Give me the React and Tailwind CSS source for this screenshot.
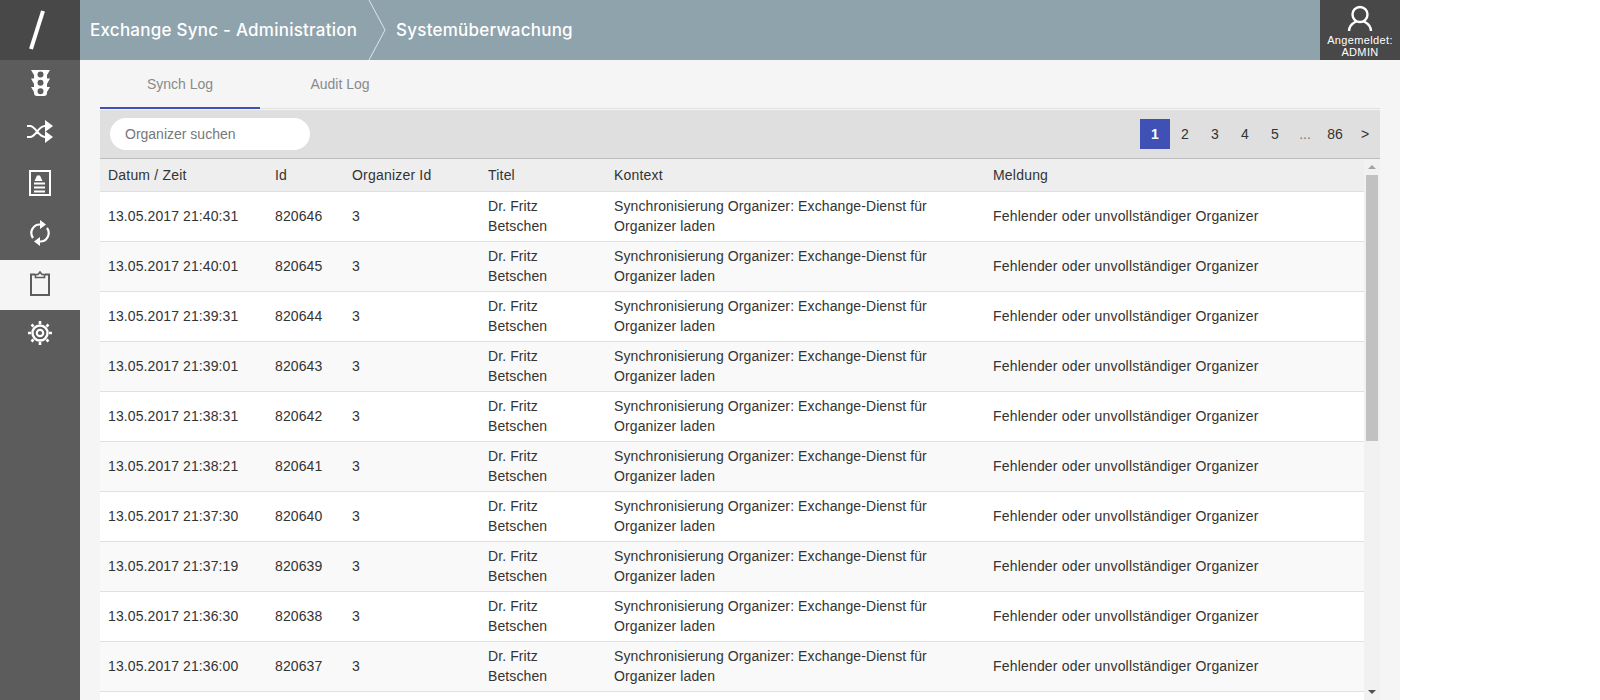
const rows = [
  ["13.05.2017 21:40:31", "820646"],
  ["13.05.2017 21:40:01", "820645"],
  ["13.05.2017 21:39:31", "820644"],
  ["13.05.2017 21:39:01", "820643"],
  ["13.05.2017 21:38:31", "820642"],
  ["13.05.2017 21:38:21", "820641"],
  ["13.05.2017 21:37:30", "820640"],
  ["13.05.2017 21:37:19", "820639"],
  ["13.05.2017 21:36:30", "820638"],
  ["13.05.2017 21:36:00", "820637"],
];

const gridCols = "grid grid-cols-[167px_77px_136px_126px_379px_1fr]";

const NavIcon = ({ active, children }) => (
  <div className={`h-[50px] pb-[4px] flex items-center justify-center ${active ? "bg-[#f5f5f5] text-[#5c5c5c]" : "text-white"}`}>
    {children}
  </div>
);

const App = () => {
  return (
    <div className="w-[1400px] h-[700px] flex overflow-hidden font-['Liberation_Sans',Arial,sans-serif] text-[14px] text-[#333]">
      {/* Sidebar */}
      <div className="w-[80px] shrink-0 bg-[#5c5c5c] flex flex-col">
        <div className="h-[60px] bg-[#484848] flex items-center justify-center">
          <svg className="mr-[7px]" width="18" height="40" viewBox="0 0 18 40">
            <path d="M15 1 L3 39" stroke="#fff" strokeWidth="4" />
          </svg>
        </div>
        <NavIcon>
          <svg width="19" height="26" viewBox="0 0 19 26" fill="currentColor">
            <path
              fillRule="evenodd"
              d="M0 0H19L16 5V8.500H19L16 14V17H19L16 22V23Q16 26 13 26H6Q3 26 3 23V22L0 17H3V14L0 8.500H3V5ZM9.500 1.400a3 3 0 1 0 0 6a3 3 0 0 0 0-6zM9.500 9.800a3 3 0 1 0 0 6a3 3 0 0 0 0-6zM9.500 18.200a3 3 0 1 0 0 6a3 3 0 0 0 0-6z"
            />
          </svg>
        </NavIcon>
        <NavIcon>
          <svg className="mb-[3px]" width="26" height="23" viewBox="0 0 26 23" fill="none" stroke="currentColor" strokeWidth="2">
            <path d="M0 6h3c6 0 8 11 15 11h2M0 17h3c6 0 8-11 15-11h2" />
            <path d="M18 0l8 6-8 6zM18 11l8 6-8 6z" fill="currentColor" stroke="none" />
          </svg>
        </NavIcon>
        <NavIcon>
          <svg width="22" height="26" viewBox="0 0 22 26" fill="none" stroke="currentColor" strokeWidth="2">
            <path d="M1 1h20v24H1z" />
            <path d="M8 5.500h3l2.500 5.500h-8z" fill="currentColor" stroke="none" />
            <path d="M5 13.500h11M5 17.500h11M5 21.500h11" />
          </svg>
        </NavIcon>
        <NavIcon>
          <svg width="20" height="26" viewBox="0 0 20 26" fill="none" stroke="currentColor" strokeWidth="2.200">
            <path d="M3 18A8.500 8.500 0 0 1 10 4.500" />
            <path d="M17 8A8.500 8.500 0 0 1 10 21.500" />
            <path d="M10 0l6 4.500-6 4.500zM10 17l-6 4.500 6 4.500z" fill="currentColor" stroke="none" />
          </svg>
        </NavIcon>
        <NavIcon active>
          <svg width="20" height="25" viewBox="0 0 20 25" fill="none" stroke="currentColor" strokeWidth="2">
            <path d="M5 3.500H1V24H19V3.500H15" />
            <path d="M5.500 6.500V3.500H8L10 1L12 3.500H14.500V6.500Z" strokeWidth="1.600" />
          </svg>
        </NavIcon>
        <NavIcon>
          <svg width="24" height="24" viewBox="0 0 24 24" fill="none" stroke="currentColor">
            <circle cx="12" cy="12" r="7.500" strokeWidth="2.400" />
            <circle cx="12" cy="12" r="3.200" strokeWidth="2.200" />
            <path d="M12 0v3M12 21v3M0 12h3M21 12h3M3.500 3.500l2 2M18.500 18.500l2 2M3.500 20.500l2-2M18.500 5.500l2-2" strokeWidth="2.600" />
          </svg>
        </NavIcon>
      </div>

      <div className="flex-1 min-w-0 flex flex-col bg-[#f5f5f5]">
        {/* Header */}
        <div className="h-[60px] shrink-0 bg-[#8fa3ad] flex items-center text-white font-['Inter',sans-serif] text-[17px] font-medium tracking-[0.24px]">
          <span className="ml-[10px] w-[278px] pt-[2px] whitespace-nowrap">Exchange Sync - Administration</span>
          <svg width="18" height="60" viewBox="0 0 18 60" fill="none" stroke="#dfe5e8" strokeWidth="1">
            <path d="M1 0 L17 30 L1 60" />
          </svg>
          <span className="ml-[10px] pt-[2px]">Systemüberwachung</span>
          <div className="ml-auto w-[80px] h-[60px] bg-[#484848] flex flex-col items-center font-['Liberation_Sans',Arial,sans-serif] font-normal text-[11px] leading-[12px] tracking-[0.35px]">
            <svg className="mt-[5px]" width="26" height="27" viewBox="0 0 26 27" fill="none" stroke="#fff" strokeWidth="2.400">
              <circle cx="13" cy="9.500" r="7.500" />
              <path d="M2 26c0-5 4-8 7-9.500M24 26c0-5-4-8-7-9.500" />
            </svg>
            <span className="mt-[2px]">Angemeldet:</span>
            <span>ADMIN</span>
          </div>
        </div>

        <div className="flex-1 min-h-0 w-[1280px] ml-[20px] flex flex-col">
          {/* Tabs */}
          <div className="h-[49px] shrink-0 flex border-b border-[#e0e0e0] text-[#8a8a8a]">
            <div className="w-[160px] pt-[1px] flex items-center justify-center border-b-2 border-[#3f51b5] -mb-px">Synch Log</div>
            <div className="w-[160px] flex items-center justify-center">Audit Log</div>
          </div>

          {/* Toolbar */}
          <div className="h-[49px] mt-px shrink-0 bg-[#dfdfdf] border-b border-[#bdbdbd] flex items-center justify-between pl-[10px]">
            <div className="w-[200px] h-[32px] bg-white rounded-full flex items-center pl-[15px] text-[#777]">Organizer suchen</div>
            <div className="flex items-center h-[30px] text-[#333]">
              <span className="w-[30px] h-[30px] bg-[#3f51b5] text-white font-bold flex items-center justify-center">1</span>
              <span className="w-[30px] text-center">2</span>
              <span className="w-[30px] text-center">3</span>
              <span className="w-[30px] text-center">4</span>
              <span className="w-[30px] text-center">5</span>
              <span className="w-[30px] text-center text-[#777]">...</span>
              <span className="w-[30px] text-center">86</span>
              <span className="w-[30px] text-center">&gt;</span>
            </div>
          </div>

          {/* Table */}
          <div className="flex-1 min-h-0 flex">
            <div className="flex-1 min-w-0 overflow-hidden bg-white">
              <div className={`${gridCols} h-[33px] items-center bg-[#eeeeee] border-b border-[#e0e0e0] pl-[8px] tracking-[0.2px]`}>
                <span>Datum / Zeit</span>
                <span>Id</span>
                <span>Organizer Id</span>
                <span>Titel</span>
                <span>Kontext</span>
                <span>Meldung</span>
              </div>
              {rows.map((row, i) => (
                <div
                  key={row[1]}
                  className={`${gridCols} h-[50px] pb-[2px] items-center border-b border-[#e0e0e0] pl-[8px] leading-[20px] tracking-[0.1px] ${i % 2 ? "bg-[#f9f9f9]" : "bg-white"}`}
                >
                  <span>{row[0]}</span>
                  <span>{row[1]}</span>
                  <span>3</span>
                  <span className="w-[90px]">Dr. Fritz Betschen</span>
                  <span className="w-[340px]">Synchronisierung Organizer: Exchange-Dienst für Organizer laden</span>
                  <span className="tracking-[0.18px]">Fehlender oder unvollständiger Organizer</span>
                </div>
              ))}
            </div>
            {/* Scrollbar */}
            <div className="w-[16px] shrink-0 bg-[#f1f1f1] flex flex-col items-center">
              <div className="h-[16px] flex items-center justify-center">
                <div className="w-0 h-0 border-x-[4px] border-x-transparent border-b-[4px] border-b-[#a3a3a3]" />
              </div>
              <div className="w-[12px] h-[266px] bg-[#c1c1c1]" />
              <div className="flex-1" />
              <div className="h-[16px] flex items-center justify-center">
                <div className="w-0 h-0 border-x-[4px] border-x-transparent border-t-[4px] border-t-[#505050]" />
              </div>
            </div>
          </div>
        </div>
      </div>
    </div>
  );
};

export default App;
